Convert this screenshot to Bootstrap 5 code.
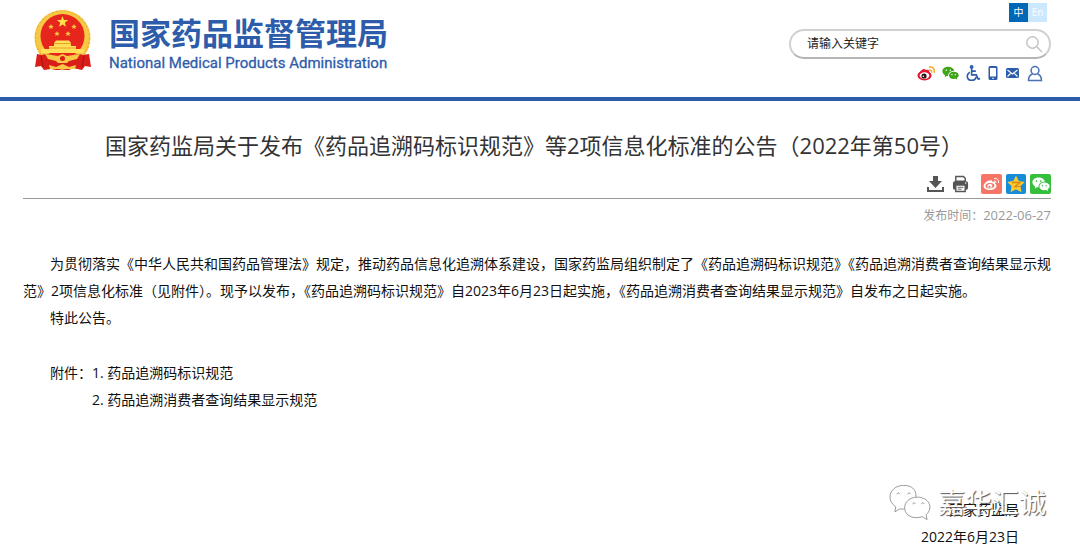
<!DOCTYPE html>
<html lang="zh-CN">
<head>
<meta charset="utf-8">
<meta name="viewport" content="width=device-width, initial-scale=1">
<title>国家药品监督管理局</title>
<link href="https://cdn.jsdelivr.net/npm/bootstrap@5.3.0/dist/css/bootstrap.min.css" rel="stylesheet">
<style>
body{font-family:"Open Sans","Noto Sans CJK SC",sans-serif;font-size:14px;line-height:27px;color:#111;background:#fff}
.site-head{height:101px;border-bottom:4px solid #2d5cab}
.emblem{width:58px;height:62px}
.brand{color:#2d5cab;gap:17px;margin:9px 0 0 34px}
.brand-cn{font:700 31px/36px "Noto Sans CJK SC",sans-serif;margin-top:5px}
.brand-en{font:400 15px/18px Roboto,sans-serif;margin-top:4px;-webkit-text-stroke:.3px #2d5cab}
.tools{width:262px;margin-right:29px;padding-top:3px}
.lang{width:19px;height:19px;font-size:10px;line-height:19px;color:#fff;background:#cce8ff}
.lang:hover{color:#fff}
.lang.current{background:#0068b7}
.search{height:30px;border:2px solid #d0d0d0;border-bottom-color:#b5b5b5;border-radius:15px;margin-top:7px;padding:0 6px 0 16px}
.search input{min-width:0;font-size:12px;line-height:26px;height:26px;color:#222;outline:0}
.search input::placeholder{color:#222;opacity:1}
.quick{gap:7px;margin:5px 8px 0 0}
.quick a,.share a,.share button{line-height:0}
.article{padding:0 29px 0 23px}
.headline{font-size:22px;line-height:30px;font-weight:400;color:#333;margin:29px 0 0;padding-right:6px}
.share{height:39px;padding-top:9px;border-bottom:1px solid #999;gap:4px}
.published{font-size:12px;line-height:18px;color:#999;margin-top:7px}
.published time{font-size:13px}
.content{margin:25px -8px 0 0}
.content p{margin:0;text-indent:27px}
.attach{margin:28px 0 0 27px}
.attach ol{list-style:none;margin:0;padding:0}
.attach a{color:#111}
.sign{margin:83px 32px 0 0}
.watermark{right:-27px;top:-12px;color:#fff;gap:7px}
.watermark span{font-size:27px;line-height:38px;text-shadow:1px 1px 1px #555}
</style>
</head>
<body>
<svg width="0" height="0" class="position-absolute" aria-hidden="true">
<symbol id="weibo" viewBox="0 0 20 16"><path fill="currentColor" fill-rule="evenodd" d="M8 4C10 3 11.500 3.700 11 5.700C14 5 15 6 14 7.500C18 9 15.500 15 8.500 15C1 15-1 11 2 7.500C4 5 7 3 8.200 4.500ZM8 6.800C4 7 2.500 9 3 11C4 14 12 14 13.300 10.700C14 8 11.500 6.600 8 6.800Z"/><path fill="currentColor" fill-rule="evenodd" d="M8.500 8C5.500 8 4.500 10 5.300 11.500C6.500 14 11 12.700 11 10C11 8.700 10 8 8.500 8ZM7.300 10.200A1.200 1.200 0 1 1 7.200 12.500A1.200 1.200 0 0 1 7.300 10.200Z"/></symbol>
<symbol id="wechat" viewBox="0 0 18 16"><path fill="currentColor" fill-rule="evenodd" d="M6.800 1.500C10 1.500 12.500 3.300 12.900 5.800C9 5.600 6 8 6.600 11.300L4.800 11.200L2.800 12.400L3.200 10.400C-2 7.200.5 1.500 6.800 1.500ZM4.500 4.300A.8.8 0 1 0 4.600 5.900A.8.8 0 0 0 4.500 4.300ZM8.700 4.300A.8.8 0 1 0 8.800 5.900A.8.8 0 0 0 8.700 4.300Z"/><path fill="currentColor" fill-rule="evenodd" d="M12.300 6.600C17.500 6.600 19.500 11 15.700 13.300L16.100 15L14.300 14.100C5.500 15.500 5.500 6.700 12.300 6.600ZM10.500 9A.7.700 0 1 0 10.600 10.400A.7.700 0 0 0 10.500 9ZM14 9A.7.700 0 1 0 14.100 10.400A.7.700 0 0 0 14 9Z"/></symbol>
</svg>
<header class="site-head d-flex justify-content-between align-items-start">
  <div class="brand d-flex align-items-start">
    <svg class="emblem" viewBox="0 0 58 62" aria-hidden="true">
      <circle cx="28.500" cy="29" r="28" fill="#f6c843"/>
      <circle cx="28.500" cy="29" r="27" fill="none" stroke="#e3a92f" stroke-dasharray="2 2"/>
      <circle cx="28.500" cy="27" r="22" fill="#e6261d"/>
      <path fill="#ffe14a" d="m28.500 7 1.400 4 4.300.1-3.400 2.600 1.200 4.100-3.500-2.400-3.500 2.400 1.200-4.100-3.400-2.600 4.300-.1z"/>
      <g fill="#f9c640"><path id="st" d="m17 15 .8 1.700 1.900.2-1.400 1.300.4 1.900-1.700-1-1.700 1 .4-1.900-1.400-1.300 1.900-.2z"/><use href="#st" x="23"/><use href="#st" x="6" y="7"/><use href="#st" x="17" y="7"/></g>
      <path fill="#ffdf57" d="M20 34 22 31.500H35L37 34V37H42V40H50V44H7V40H15V37H20Z"/>
      <path fill="#e9a427" d="M20 34H37V35H20ZM15 38.500H42V39.500H15Z"/>
      <path fill="#d91d18" d="M8 46C17 43 21 48 28.500 50C36 48 40 43 49 46L55 45 57 58 51 57 48 61 39 59 35 61H22L17 60 10 61 7 57 1 58 3 45Z"/>
      <path fill="#f7c947" d="M11 45 24 47 28.500 45 33 47 46 45 43 50 35 52 33 54H24L22 52 14 50Z"/>
      <path fill="#f7c947" d="M15 56 22 58 28.500 55 35 58 42 56 41 60 32 60 28.500 61 25 60 16 60Z"/>
      <circle cx="28.500" cy="49.500" r="2.500" fill="#d91d18"/>
      <path stroke="#a80f10" fill="none" d="m7 47 2 11m41-11-2 11"/>
    </svg>
    <div><div class="brand-cn">国家药品监督管理局</div><div class="brand-en">National Medical Products Administration</div></div>
  </div>
  <div class="tools">
    <nav class="d-flex justify-content-end me-1" aria-label="语言"><a href="#" class="lang current text-center text-decoration-none">中</a><a href="#" class="lang text-center text-decoration-none">En</a></nav>
    <form class="search d-flex align-items-center">
      <input type="text" class="flex-grow-1 border-0 bg-transparent p-0" placeholder="请输入关键字" aria-label="请输入关键字">
      <button type="button" class="btn p-0 border-0 lh-1" aria-label="搜索"><svg width="18" height="18" fill="none" stroke="#c4c4c4" stroke-width="1.500"><circle cx="7.500" cy="7.500" r="5.700"/><path d="m12 12 5 5"/></svg></button>
    </form>
    <nav class="quick d-flex justify-content-end align-items-center" aria-label="快捷入口">
      <a href="#" aria-label="微博"><svg width="18" height="17" viewBox="0 0 18 17"><ellipse cx="7.500" cy="10.500" rx="7" ry="5" fill="#e6162d"/><path d="M3 7C5 4 8 3 8.500 5C11 4 13 5 12 8Z" fill="#e6162d"/><ellipse cx="7.500" cy="10.600" rx="4.800" ry="3.400" fill="#fff"/><circle cx="7" cy="11" r="2.600" fill="#2b1517"/><circle cx="6.300" cy="11.300" r=".8" fill="#fff"/><path d="M12 5c2-.5 3 1 2.600 2.500M12 2.200c4-1 6 2 5 5.500" fill="none" stroke="#f7a51c" stroke-width="1.400"/></svg></a>
      <a href="#" aria-label="微信"><svg width="17" height="16" viewBox="0 0 18 16" color="#3fa51b"><use href="#wechat"/></svg></a>
      <a href="#" aria-label="无障碍"><svg width="15" height="18" viewBox="0 0 16 18" fill="none" stroke="#2d5cab" stroke-width="1.700"><circle cx="6" cy="2.500" r="1.200" fill="#2d5cab"/><path d="M6 4V11H11L13 15.500 15 15M6 7H10.500M4 8C-1 12 2 17 6 16.800C9 16.800 10.500 15 11 13"/></svg></a>
      <a href="#" aria-label="手机"><svg width="10" height="16"><path fill="#2d5cab" fill-rule="evenodd" d="M2 1H8Q9.500 1 9.500 2.500V13.500Q9.500 15 8 15H2Q.5 15 .5 13.500V2.500Q.5 1 2 1ZM2 3V11.500H8V3ZM4.300 12.700H5.700V14H4.300Z"/></svg></a>
      <a href="#" aria-label="邮箱"><svg width="15" height="12"><rect x="1" y="1" width="13" height="10" rx="1.500" fill="#2d5cab"/><path d="m2.500 3 5 4 5-4M2.500 9.500l3-3m7 3-3-3" fill="none" stroke="#fff" stroke-width="1.100"/></svg></a>
      <a href="#" aria-label="个人中心"><svg width="16" height="17" fill="none" stroke="#4a6fb5" stroke-width="1.500"><circle cx="8" cy="5.500" r="3.900"/><path d="M5.500 9C2.500 10 1.500 12.500 1.500 15.500H14.500C14.500 12.500 13.500 10 10.500 9"/></svg></a>
    </nav>
  </div>
</header>
<main class="article">
  <h1 class="headline text-center">国家药监局关于发布《药品追溯码标识规范》等2项信息化标准的公告（2022年第50号）</h1>
  <div class="share d-flex justify-content-end align-items-center">
    <button type="button" class="btn p-0 border-0 me-1" aria-label="下载"><svg width="17" height="18" fill="#555"><path d="M6 1H11V6H15L8.500 13 2 6H6ZM0 12H2V15H15V12H17V17H0Z"/></svg></button>
    <button type="button" class="btn p-0 border-0 me-2" aria-label="打印"><svg width="17" height="18" viewBox="0 0 18 18"><path d="M4 1H12L14 3V6H4Z" fill="#fff" stroke="#555" stroke-width="1.500"/><rect x="1" y="6" width="16" height="9" rx="2" fill="#555"/><path d="M4 10H14V17H4Z" fill="#fff" stroke="#555" stroke-width="1.500"/><path d="M6 12.500H12M6 14.500H10" stroke="#555"/><circle cx="14.500" cy="8" r=".8" fill="#fff"/></svg></button>
    <a href="#" aria-label="分享到微博"><svg width="21" height="20"><rect width="21" height="20" rx="2" fill="#f77567"/><use href="#weibo" x="2" y="3" width="17" height="14" color="#fff"/><path d="M13 7q2-.5 2 2M13 4.500c3-.5 5 1.500 4.500 4.500" fill="none" stroke="#fff"/></svg></a>
    <a href="#" aria-label="分享到QQ空间"><svg width="20" height="20"><rect width="20" height="20" rx="2" fill="#168bd8"/><path d="m10 1.500 2.700 5.600 6 .8-4.300 4.300 1.100 6.100L10 15.300l-5.500 3 1.100-6.100-4.300-4.300 6-.8z" fill="#fdc92e"/><path d="M6 8.500h8l-5 4q3 .5 6-.5" fill="none" stroke="#d88910" stroke-width="1.300"/></svg></a>
    <a href="#" aria-label="分享到微信"><svg width="21" height="20"><rect width="21" height="20" rx="2" fill="#36be3d"/><use href="#wechat" x="2" y="2" width="18" height="16" color="#fff"/></svg></a>
  </div>
  <div class="published text-end">发布时间：<time datetime="2022-06-27">2022-06-27</time></div>
  <article class="content">
    <p>为贯彻落实《中华人民共和国药品管理法》规定，推动药品信息化追溯体系建设，国家药监局组织制定了《药品追溯码标识规范》《药品追溯消费者查询结果显示规范》2项信息化标准（见附件）。现予以发布，《药品追溯码标识规范》自2023年6月23日起实施，《药品追溯消费者查询结果显示规范》自发布之日起实施。</p>
    <p>特此公告。</p>
  </article>
  <section class="attach d-flex"><span>附件：</span><ol><li><a href="#" class="text-decoration-none">1. 药品追溯码标识规范</a></li><li><a href="#" class="text-decoration-none">2. 药品追溯消费者查询结果显示规范</a></li></ol></section>
  <div class="sign position-relative text-end">
    <div>国家药监局</div><div>2022年6月23日</div>
    <div class="watermark position-absolute d-flex align-items-center text-nowrap">
      <svg width="42" height="38" viewBox="0 0 43 38" fill="#fff" stroke="#999" stroke-width="1"><path d="M15 1C7 1 1 6 1 13C1 17 3 20 7 23L6 28 11 25C28 28 36 1 15 1Z"/><path d="M29 13C21 13 16 18 16 24C16 32 25 36 34 33L39 36 38 31C46 24 41 13 29 13Z"/><path fill="none" d="M8 10q2-3 3 0m8 0q2-3 3 0m2 10q2-3 3 0m6 0q2-3 3 0"/></svg>
      <span>嘉华汇诚</span>
    </div>
  </div>
</main>
<script src="https://cdn.jsdelivr.net/npm/bootstrap@5.3.0/dist/js/bootstrap.bundle.min.js"></script>
</body>
</html>
